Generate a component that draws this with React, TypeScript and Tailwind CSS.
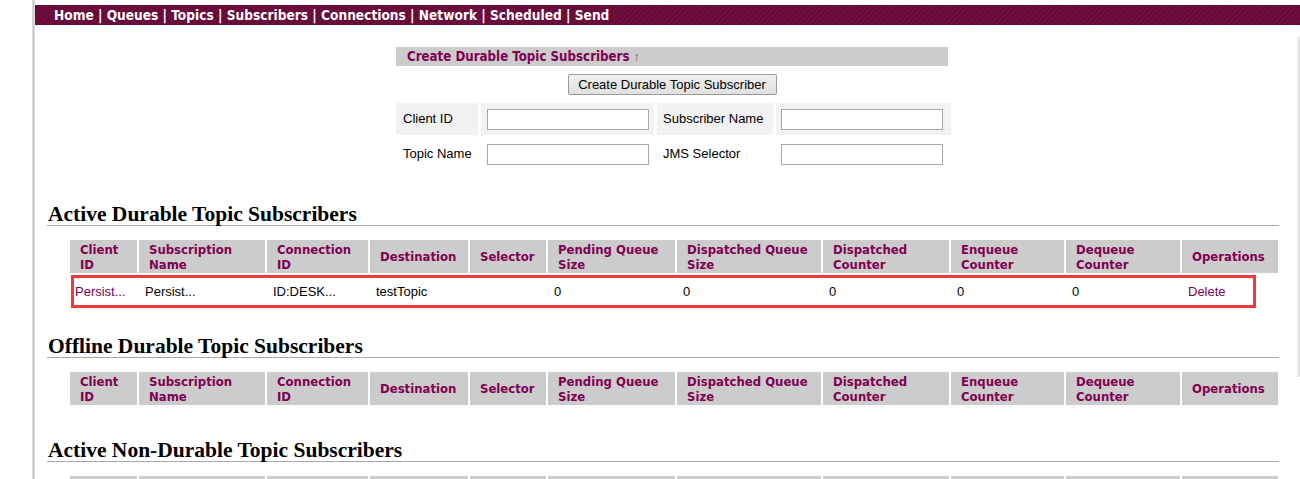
import React from "react";

const sans = "font-['Liberation_Sans',Arial,sans-serif]";
const bold = "font-['DejaVu_Sans_Condensed','DejaVu_Sans',sans-serif] font-bold";
const serif = "font-['Liberation_Serif',Georgia,serif]";

const cols = "grid grid-cols-[67px_126px_101px_98px_76px_127px_144px_126px_113px_114px_96px] gap-x-[2px]";

const headers: string[][] = [
  ["Client", "ID"],
  ["Subscription", "Name"],
  ["Connection", "ID"],
  ["Destination"],
  ["Selector"],
  ["Pending Queue", "Size"],
  ["Dispatched Queue", "Size"],
  ["Dispatched", "Counter"],
  ["Enqueue", "Counter"],
  ["Dequeue", "Counter"],
  ["Operations"],
];

function HeaderRow() {
  return (
    <div className={`${cols} h-[33px]`}>
      {headers.map((h, i) => (
        <div
          key={i}
          className={`${bold} bg-[#cccccc] flex flex-col justify-center pl-[10px] text-[13px] leading-[15px] text-[#800052]`}
        >
          {h.map((l, j) => (
            <span key={j}>{l}</span>
          ))}
        </div>
      ))}
    </div>
  );
}

function Heading({ children }: { children: React.ReactNode }) {
  return (
    <div className={`${serif} border-b border-[#a8a8a8] pl-[1px] text-[21.5px] leading-[22px] font-bold text-black`}>
      {children}
    </div>
  );
}

export default function App() {
  const data = ["Persist...", "Persist...", "ID:DESK...", "testTopic", "", "0", "0", "0", "0", "0", "Delete"];
  return (
    <div className={`${sans} w-[1300px] h-[479px] overflow-hidden bg-white flex`}>
      <div className="w-[32px] shrink-0" />
      <div className="w-[3px] shrink-0 bg-[linear-gradient(90deg,#e2e2e2,#c8c8c8,#e8e8e8)]" />
      <div className="flex-1 flex flex-col pt-[5px]">
        <div className={`${bold} h-[20px] bg-[repeating-linear-gradient(135deg,#6f0e3f_0px,#6f0e3f_2px,#640a36_2px,#640a36_4px)] pl-[19px] flex items-center text-white text-[13.6px]`}>
          Home | Queues | Topics | Subscribers | Connections | Network | Scheduled | Send
        </div>
        <div className="flex">
          <div className="flex-1 pl-[12px] pr-[18px]">
            {/* Create form */}
            <div className="ml-[349px] w-[552px] mt-[22px]">
              <div className="h-[19px] bg-[#cccccc] pl-[11px] flex items-center text-[13px]">
                <span className={`${bold} text-[13.2px] text-[#800052]`}>Create Durable Topic Subscribers</span>
                <span className="ml-[4px] text-[#555]">↑</span>
              </div>
              <div className="flex justify-center mt-[8px]">
                <button className="h-[21px] w-[209px] border border-[#9a9a9a] rounded-[2px] bg-[linear-gradient(#f0f0f0,#e0e0e0)] text-[13px] text-black">
                  Create Durable Topic Subscriber
                </button>
              </div>
              <div className="grid grid-cols-[82px_173px_116px_175px] gap-[3px] mt-[8px] text-[13px] text-black">
                <div className="h-[32px] bg-[#f2f2f2] flex items-center pl-[7px]">Client ID</div>
                <div className="h-[32px] bg-[#f2f2f2] flex items-center pl-[6px]">
                  <div className="w-[162px] h-[21px] border border-[#a9a9a9] bg-white" />
                </div>
                <div className="h-[32px] bg-[#f2f2f2] flex items-center pl-[6px]">Subscriber Name</div>
                <div className="h-[32px] bg-[#f2f2f2] flex items-center pl-[5px]">
                  <div className="w-[162px] h-[21px] border border-[#a9a9a9] bg-white" />
                </div>
                <div className="h-[32px] flex items-center pl-[7px]">Topic Name</div>
                <div className="h-[32px] flex items-center pl-[6px]">
                  <div className="w-[162px] h-[21px] border border-[#a9a9a9] bg-white" />
                </div>
                <div className="h-[32px] flex items-center pl-[6px]">JMS Selector</div>
                <div className="h-[32px] flex items-center pl-[5px]">
                  <div className="w-[162px] h-[21px] border border-[#a9a9a9] bg-white" />
                </div>
              </div>
            </div>

            {/* Active Durable */}
            <div className="mt-[33px]">
              <Heading>Active Durable Topic Subscribers</Heading>
            </div>
            <div className="ml-[23px] mt-[14px]">
              <HeaderRow />
              <div className={`${cols} h-[33px] mt-[2px] relative text-[13px]`}>
                {data.map((d, i) => (
                  <div
                    key={i}
                    className={`flex items-center ${i === 0 ? "pl-[5px]" : "pl-[6px]"} ${
                      i === 0 || i === 10 ? "text-[#800052]" : "text-black"
                    }`}
                  >
                    {d}
                  </div>
                ))}
                <div className="absolute left-[1px] right-[23px] top-0 bottom-0 border-[3px] border-[#f03a3a]" />
              </div>
            </div>

            {/* Offline Durable */}
            <div className="mt-[27px]">
              <Heading>Offline Durable Topic Subscribers</Heading>
            </div>
            <div className="ml-[23px] mt-[14px]">
              <HeaderRow />
            </div>

            {/* Active Non-Durable */}
            <div className="mt-[34px]">
              <Heading>Active Non-Durable Topic Subscribers</Heading>
            </div>
            <div className="ml-[23px] mt-[14px]">
              <HeaderRow />
            </div>
          </div>
          <div className="w-[3px] shrink-0 mt-[12px] h-[340px] bg-[linear-gradient(90deg,#f4f4f4,#dcdcdc)]" />
        </div>
      </div>
    </div>
  );
}
